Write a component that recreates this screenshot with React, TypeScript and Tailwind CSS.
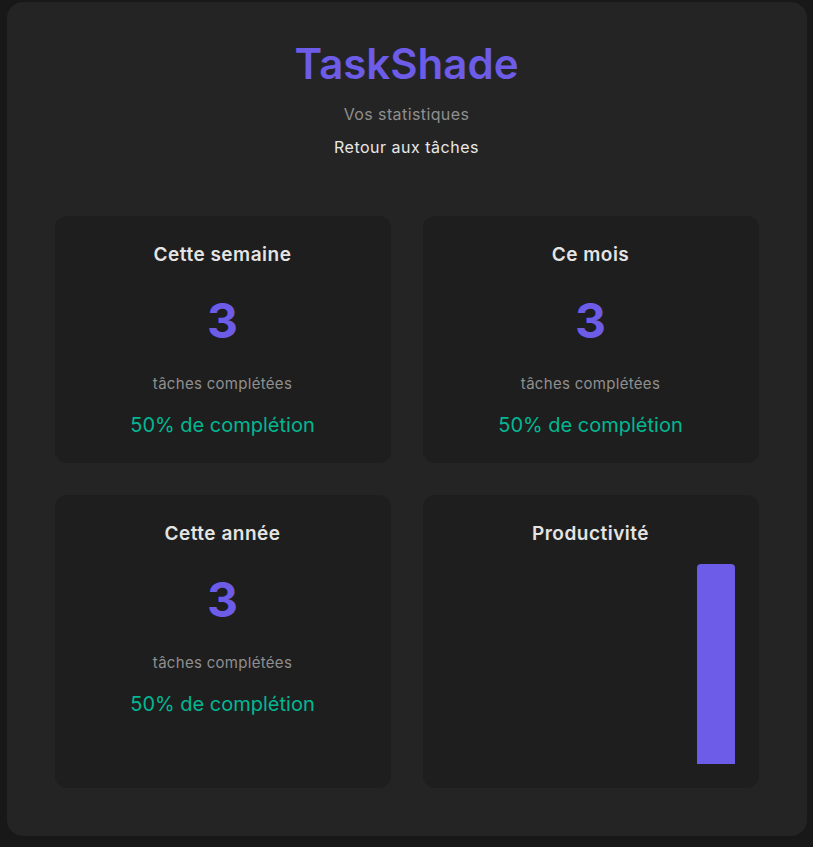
const stats = [
  { title: "Cette semaine", count: 3, rate: 50 },
  { title: "Ce mois", count: 3, rate: 50 },
  { title: "Cette année", count: 3, rate: 50 },
]

// productivité des 7 derniers jours
const days = [0, 0, 0, 0, 0, 0, 3]

function StatCard({ title, count, rate }: { title: string; count: number; rate: number }) {
  return (
    <div className="bg-[#1e1e1e] rounded-xl p-6 text-center">
      <h3 className="text-[19px] tracking-[0.5px] leading-[29px] font-semibold text-[#e4e4e4]">{title}</h3>
      <div className="text-5xl leading-[72px] font-bold text-[#6c5ce7] my-4">{count}</div>
      <p className="text-[15px] tracking-[0.3px] leading-[21px] text-[#8f8f8f]">tâches complétées</p>
      <p className="text-xl leading-7 text-[#00b894] mt-[17px]">{rate}% de complétion</p>
    </div>
  )
}

function ProductivityCard() {
  const max = Math.max(...days, 1)
  return (
    <div className="bg-[#1e1e1e] rounded-xl p-6">
      <h3 className="text-[19px] tracking-[0.5px] leading-[29px] font-semibold text-[#e4e4e4] text-center">Productivité</h3>
      <div className="mt-4 h-[200px] flex items-end gap-1">
        {days.map((d, i) => (
          <div key={i} className="flex-1 bg-[#6c5ce7] rounded-t" style={{ height: `${(d / max) * 100}%` }} />
        ))}
      </div>
    </div>
  )
}

export default function App() {
  return (
    <div className="min-h-[847px] bg-[#181818] pt-[2px] font-['Inter',sans-serif]">
      <div className="w-[800px] mx-auto bg-[#242424] rounded-2xl px-12 pt-8 pb-12">
        <header className="text-center mb-[57px]">
          <h1 className="text-[42px] leading-[60px] font-semibold text-[#6c5ce7]">TaskShade</h1>
          <p className="mt-2 text-base tracking-[0.4px] leading-6 text-[#8f8f8f]">Vos statistiques</p>
          <a className="mt-[9px] block text-base tracking-[0.5px] leading-6 text-[#e8e8e8]">Retour aux tâches</a>
        </header>

        <div className="grid grid-cols-2 gap-8">
          {stats.map((s) => (
            <StatCard key={s.title} {...s} />
          ))}
          <ProductivityCard />
        </div>
      </div>
    </div>
  )
}
